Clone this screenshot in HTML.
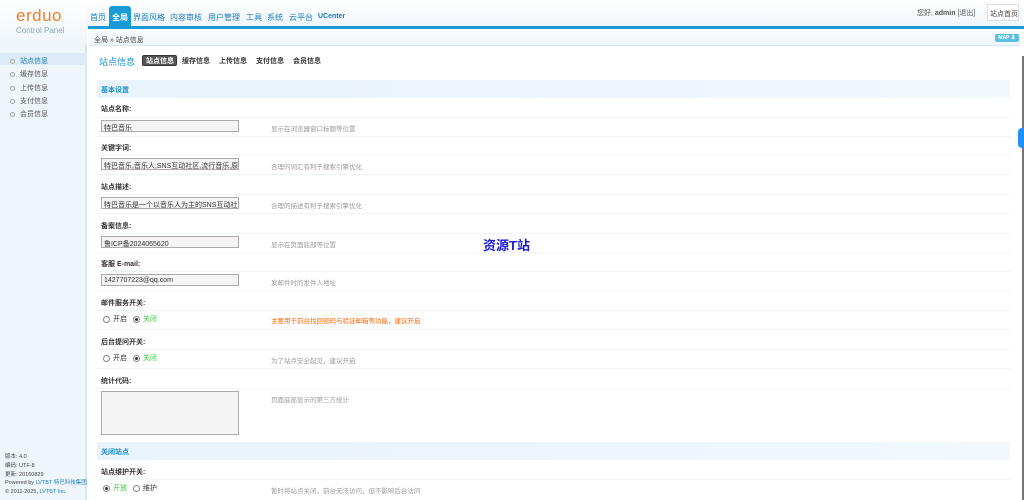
<!DOCTYPE html>
<html><head><meta charset="utf-8"><style>
*{margin:0;padding:0;box-sizing:border-box}
body{width:1024px;height:500px;overflow:hidden;background:#fff;font-family:"Liberation Sans","Noto Sans CJK SC",sans-serif;font-size:7px;color:#333;position:relative}
.abs{position:absolute;white-space:nowrap}
#hdr{position:absolute;left:0;top:0;width:1024px;height:28px;background:linear-gradient(#fff,#eef5fa)}
#bl{position:absolute;left:88px;top:26px;width:936px;height:3px;background:#1a9bd7}
#side{position:absolute;left:0;top:28px;width:87px;height:472px;background:#eef5fb;border-right:2px solid #d2e6f4}
#logo{position:absolute;left:0;top:0;width:87px;height:45px;background:linear-gradient(#fff,#eef5fa)}
#crumb{position:absolute;left:89px;top:29px;width:931px;height:17px;background:linear-gradient(#fbfdfe,#eef5fa);border-bottom:1px solid #d8e8f3}
.nav{top:12px;font-size:8px;color:#1a7fbf}
.sec{position:absolute;left:97px;width:913px;height:18px;background:linear-gradient(90deg,#e8f3fb,#f2f8fc);color:#1a8fd0;font-weight:bold;font-size:7px;padding:5px 4px}
.lbl{left:101px;font-weight:bold;font-size:7px;color:#333}
.inp{position:absolute;left:101px;width:138px;height:12px;border:1px solid #aaa;background:#f4f4f4;font-size:7px;padding:2px 2px;overflow:hidden;white-space:nowrap;color:#333}
.hint{left:271px;color:#999;font-size:6.5px}
.line{position:absolute;left:97px;width:913px;height:1px;background:#eef5f8}
.r{display:inline-block;width:7px;height:7px;border:1px solid #888;border-radius:50%;vertical-align:middle;margin-right:3px;background:#fff;position:relative}
.r.on::after{content:"";position:absolute;left:1px;top:1px;width:3px;height:3px;border-radius:50%;background:#333}
.g{color:#3c3}
.sl{left:10px;font-size:7px;color:#555}
.sl::before{content:"";display:inline-block;width:3px;height:3px;border:1px solid #aaa;border-radius:50%;margin-right:5px;vertical-align:middle}
.tab{top:56px;font-size:7px;font-weight:bold;color:#333}
</style></head><body>
<div id="hdr"></div>
<div id="side"></div>
<div id="logo"></div>
<div class="abs" style="left:16px;top:6px;font-size:17px;color:#f47b20;letter-spacing:0.5px">erduo</div>
<div class="abs" style="left:16px;top:26px;font-size:8px;color:#8aa">Control Panel</div>
<div class="abs" style="left:109px;top:6px;width:22px;height:23px;background:#1a9bd7;border-radius:3px 3px 0 0"></div>
<div class="abs nav" style="left:90px">首页</div>
<div class="abs nav" style="left:112px;color:#fff;font-weight:bold">全局</div>
<div class="abs nav" style="left:133px">界面风格</div>
<div class="abs nav" style="left:170px">内容审核</div>
<div class="abs nav" style="left:208px">用户管理</div>
<div class="abs nav" style="left:246px">工具</div>
<div class="abs nav" style="left:267px">系统</div>
<div class="abs nav" style="left:289px">云平台</div>
<div class="abs nav" style="left:318px;font-weight:bold;font-size:7px;top:13px">UCenter</div>
<div class="abs" style="left:917px;top:8px;color:#555">您好, <b>admin</b> [退出]</div>
<div class="abs" style="left:987px;top:4px;width:32px;height:17px;border:1px solid #ddd;background:#fff;padding:4px 2px;color:#444">站点首页</div>
<div id="bl"></div>
<div id="crumb"></div>
<div class="abs" style="left:94px;top:35px;color:#444">全局 » 站点信息</div>
<div class="abs" style="left:995px;top:34px;width:24px;height:8px;background:#5bc0de;color:#fff;font-size:5px;font-weight:bold;text-align:center;line-height:8px;border-radius:2px">MAP ⬇</div>
<div class="abs" style="left:1022px;top:56px;width:2px;height:444px;background:#777"></div>
<div class="abs" style="left:1018px;top:128px;width:6px;height:20px;background:#1e90ff;border-radius:4px 0 0 4px"></div>
<div class="abs" style="left:0;top:53px;width:87px;height:12px;background:#dcebf7"></div>
<div class="abs sl" style="top:56px;color:#1a7fbf">站点信息</div>
<div class="abs sl" style="top:69px">缓存信息</div>
<div class="abs sl" style="top:83px">上传信息</div>
<div class="abs sl" style="top:96px">支付信息</div>
<div class="abs sl" style="top:109px">会员信息</div>
<div class="abs" style="left:5px;top:453px;font-size:5.5px;color:#444;line-height:8.8px">版本: 4.0<br>编码: UTF-8<br>更新: 20160829<br>Powered by <span style="color:#1a7fbf">LVTBT 特巴科技集团</span><br>© 2011-2025, <span style="color:#1a7fbf">LVTBT Inc.</span></div>
<div class="abs" style="left:99px;top:55px;font-size:9px;color:#1a8fd0">站点信息</div>
<div class="abs" style="left:142px;top:55px;width:35px;height:11px;background:#555;border-radius:2px;border:1px solid #333"></div>
<div class="abs tab" style="left:146px;color:#fff">站点信息</div>
<div class="abs tab" style="left:182px">缓存信息</div>
<div class="abs tab" style="left:219px">上传信息</div>
<div class="abs tab" style="left:256px">支付信息</div>
<div class="abs tab" style="left:293px">会员信息</div>
<div class="sec" style="top:80px">基本设置</div>
<div class="abs lbl" style="top:104px">站点名称:</div><div class="line" style="top:117px"></div>
<div class="inp" style="top:120px">特巴音乐</div><div class="abs hint" style="top:123px">显示在浏览器窗口标题等位置</div><div class="line" style="top:136px"></div>
<div class="abs lbl" style="top:143px">关键字词:</div><div class="line" style="top:155px"></div>
<div class="inp" style="top:158px">特巴音乐,音乐人,SNS互动社区,流行音乐,原创音乐</div><div class="abs hint" style="top:161px">合理的词汇有利于搜索引擎优化</div><div class="line" style="top:174px"></div>
<div class="abs lbl" style="top:182px">站点描述:</div><div class="line" style="top:194px"></div>
<div class="inp" style="top:197px">特巴音乐是一个以音乐人为主的SNS互动社区，</div><div class="abs hint" style="top:200px">合理的描述有利于搜索引擎优化</div><div class="line" style="top:213px"></div>
<div class="abs lbl" style="top:221px">备案信息:</div><div class="line" style="top:233px"></div>
<div class="inp" style="top:236px">鲁ICP备2024065620</div><div class="abs hint" style="top:239px">显示在页面底部等位置</div><div class="line" style="top:252px"></div>
<div class="abs lbl" style="top:259px">客服 E-mail:</div><div class="line" style="top:271px"></div>
<div class="inp" style="top:274px">1427707223@qq.com</div><div class="abs hint" style="top:277px">发邮件时的发件人地址</div><div class="line" style="top:291px"></div>
<div class="abs" style="left:483px;top:235px;font-size:13px;font-weight:bold;color:#1a1adb">资源T站</div>
<div class="abs lbl" style="top:298px">邮件服务开关:</div><div class="line" style="top:310px"></div>
<div class="abs" style="left:103px;top:314px"><span class="r"></span>开启 &nbsp; <span class="r on"></span><span class="g">关闭</span></div>
<div class="abs hint" style="top:315px;color:#f60">主要用于前台找回密码与验证邮箱等功能，建议开启</div><div class="line" style="top:329px"></div>
<div class="abs lbl" style="top:337px">后台提问开关:</div><div class="line" style="top:349px"></div>
<div class="abs" style="left:103px;top:353px"><span class="r"></span>开启 &nbsp; <span class="r on"></span><span class="g">关闭</span></div>
<div class="abs hint" style="top:355px">为了站点安全起见，建议开启</div><div class="line" style="top:368px"></div>
<div class="abs lbl" style="top:376px">统计代码:</div><div class="line" style="top:388px"></div>
<div class="inp" style="top:391px;height:44px"></div><div class="abs hint" style="top:394px">页面底部显示的第三方统计</div>
<div class="sec" style="top:442px">关闭站点</div>
<div class="abs lbl" style="top:467px">站点维护开关:</div><div class="line" style="top:479px"></div>
<div class="abs" style="left:103px;top:483px"><span class="r on"></span><span class="g">开放</span> &nbsp; <span class="r"></span>维护</div>
<div class="abs hint" style="top:485px">暂时将站点关闭，前台无法访问，但不影响后台访问</div>
</body></html>
